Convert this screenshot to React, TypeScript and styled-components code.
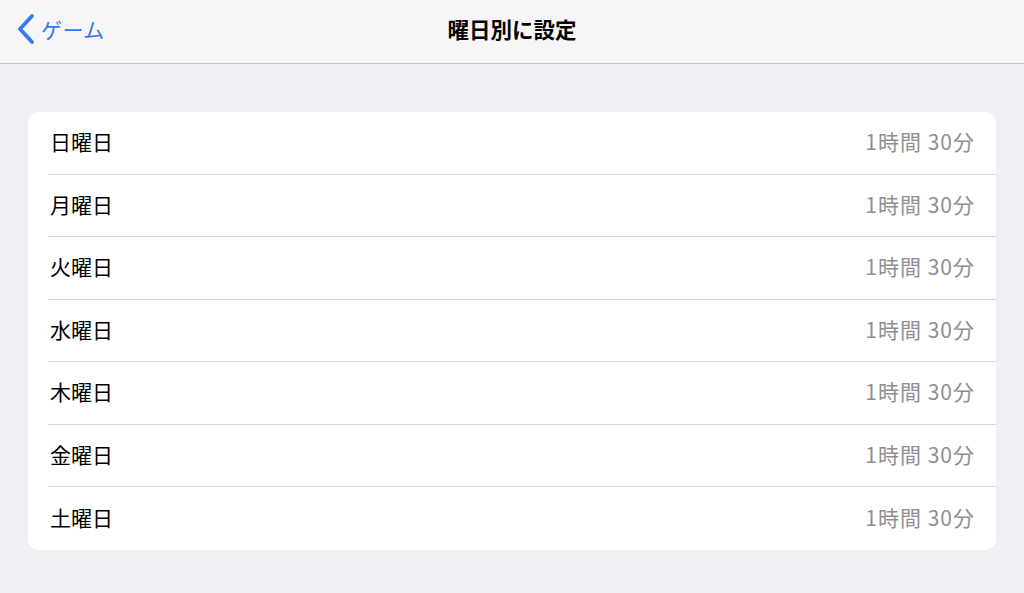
import React from 'react';
import styled, { createGlobalStyle } from 'styled-components';

const GlobalStyle = createGlobalStyle`
  html, body {
    margin: 0;
    padding: 0;
    background: #efeff4;
    font-family: "Noto Sans CJK JP", "Liberation Sans", sans-serif;
  }
`;

const Page = styled.div`
  width: 1024px;
  height: 593px;
  background: #efeff4;
  overflow: hidden;
`;

const NavBar = styled.header`
  position: relative;
  display: flex;
  align-items: center;
  justify-content: center;
  height: 64px;
  background: #f6f6f8;
  border-bottom: 1px solid #c4c4c8;
  box-sizing: border-box;
`;

const BackButton = styled.button`
  position: absolute;
  left: 16px;
  top: 0;
  height: 58px;
  display: flex;
  align-items: center;
  gap: 5px;
  padding: 0;
  border: none;
  background: none;
  color: #3478f6;
  font-family: inherit;
  font-size: 21px;
  letter-spacing: 0.5px;
  cursor: pointer;
`;

const Title = styled.h1`
  margin: 0 0 6px;
  font-size: 21.5px;
  font-weight: 700;
  color: #000;
`;

const Content = styled.main`
  padding: 48px 28px 0;
`;

const Card = styled.ul`
  margin: 0;
  padding: 0;
  list-style: none;
  background: #fff;
  border-radius: 10px;
  overflow: hidden;
`;

const Row = styled.li`
  display: flex;
  align-items: center;
  justify-content: space-between;
  height: 62.5px;
  margin-left: 20px;
  padding: 0 22px 3px 2px;
  box-sizing: border-box;
  border-bottom: 1px solid #d8d8dc;

  &:last-child {
    border-bottom: none;
  }
`;

const Label = styled.span`
  font-size: 21px;
  color: #000;
`;

const Value = styled.span`
  font-size: 21px;
  letter-spacing: 1px;
  margin-right: -1px;
  color: #8e8e93;
`;

const days = ['日曜日', '月曜日', '火曜日', '水曜日', '木曜日', '金曜日', '土曜日'];

const Chevron = () => (
  <svg width="20" height="32" viewBox="0 0 20 32" fill="none">
    <path
      d="M16 3 L4 16 L16 29"
      stroke="currentColor"
      strokeWidth="3.8"
      strokeLinecap="round"
      strokeLinejoin="round"
    />
  </svg>
);

const App: React.FC = function () {
  return (
    <Page>
      <GlobalStyle />
      <NavBar>
        <BackButton>
          <Chevron />
          <span>ゲーム</span>
        </BackButton>
        <Title>曜日別に設定</Title>
      </NavBar>
      <Content>
        <Card>
          {days.map((day) => (
            <Row key={day}>
              <Label>{day}</Label>
              <Value>1時間 30分</Value>
            </Row>
          ))}
        </Card>
      </Content>
    </Page>
  );
};

export default App;
